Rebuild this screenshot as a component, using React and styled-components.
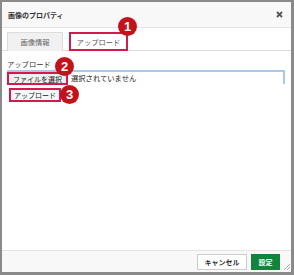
import React from 'react'
import styled, { createGlobalStyle } from 'styled-components'

const GlobalStyle = createGlobalStyle`
 html, body {
  margin: 0;
  padding: 0;
  background: #8a8a8a;
 }
 body {
  font-family: "Noto Sans CJK JP", "Noto Sans", sans-serif;
  color: #333;
 }
`

const Dialog = styled.div`
 box-sizing: border-box;
 width: 294px;
 height: 275px;
 display: flex;
 flex-direction: column;
 border-style: solid;
 border-color: #8a8a8a;
 border-width: 2px 3px 3px 2px;
 background: #fff;
`

const Header = styled.div`
 height: 25px;
 flex: none;
 display: flex;
 align-items: center;
 justify-content: space-between;
 padding: 0 8px 0 6px;
 background: #f8f8f8;
 border-bottom: 1px solid #e4e4e4;
`

const Title = styled.div`
 font-size: 7px;
 font-weight: 700;
 color: #333;
`

const Body = styled.div`
 flex: 1;
 display: flex;
 flex-direction: column;
 padding-top: 4px;
`

const TabBar = styled.div`
 display: flex;
 gap: 6px;
 padding-left: 5px;
 border-bottom: 1px solid #ddd;
`

const Tab = styled.div`
 position: relative;
 box-sizing: border-box;
 height: 19px;
 width: ${p => p.$w}px;
 display: flex;
 align-items: center;
 justify-content: center;
 font-size: 7.3px;
 color: ${p => (p.$active ? '#555' : '#666')};
 background: ${p => (p.$active ? '#fff' : '#f1f1f1')};
 border: ${p => (p.$active ? '2px solid #d31a4c' : '1px solid #ddd')};
 border-bottom: ${p => (p.$active ? '2px solid #d31a4c' : 'none')};
 margin-bottom: -1px;
`

const Content = styled.div`
 display: flex;
 flex-direction: column;
 padding: 9px 6px 0 5px;
`

const Label = styled.div`
 font-size: 7.3px;
 line-height: 9px;
 color: #333;
`

const FileField = styled.div`
 box-sizing: border-box;
 height: 14px;
 display: flex;
 align-items: flex-start;
 gap: 3px;
 border-top: 2px solid #a9c8f0;
 border-right: 2px solid #a9c8f0;
 margin-top: 1px;
`

const Outlined = styled.div`
 position: relative;
 box-sizing: border-box;
 height: ${p => p.$h}px;
 display: flex;
 align-items: center;
 padding: 0 ${p => p.$px}px;
 font-size: 7px;
 color: #222;
 background: ${p => p.$bg};
 border: 2px solid #d31a4c;
`

const FileText = styled.div`
 font-size: 7.3px;
 line-height: 10px;
 color: #222;
 margin-top: 1px;
`

const UploadRow = styled.div`
 display: flex;
 padding: 4px 0 0 2px;
`

const Badge = styled.div`
 position: absolute;
 width: 19px;
 height: 19px;
 border-radius: 50%;
 background: #c4121c;
 color: #fff;
 font-family: "Liberation Sans", Arial, sans-serif;
 font-size: 13px;
 font-weight: 700;
 display: flex;
 align-items: center;
 justify-content: center;
 top: ${p => p.$top}px;
 left: ${p => p.$left}px;
`

const Footer = styled.div`
 height: 21px;
 flex: none;
 display: flex;
 align-items: center;
 justify-content: flex-end;
 gap: 4px;
 padding-right: 11px;
 background: #f8f8f8;
 border-top: 1px solid #e4e4e4;
 position: relative;
`

const FooterButton = styled.div`
 box-sizing: border-box;
 height: 16px;
 width: ${p => p.$w}px;
 display: flex;
 align-items: center;
 justify-content: center;
 font-size: 7px;
 font-weight: 700;
 color: ${p => (p.$primary ? '#fff' : '#333')};
 background: ${p => (p.$primary ? '#13843b' : '#fff')};
 border: 1px solid ${p => (p.$primary ? '#13843b' : '#ccc')};
`

const Grip = styled.svg`
 position: absolute;
 right: 1px;
 bottom: 2px;
`

const App = () => (
 <>
  <GlobalStyle />
  <Dialog>
   <Header>
    <Title>画像のプロパティ</Title>
    <svg width="7" height="7" viewBox="0 0 7 7">
     <path d="M1 1L6 6M6 1L1 6" stroke="#555" strokeWidth="1.8" />
    </svg>
   </Header>
   <Body>
    <TabBar>
     <Tab $w={56}>画像情報</Tab>
     <Tab $w={59} $active>
      アップロード
      <Badge $top={-17} $left={47}>1</Badge>
     </Tab>
    </TabBar>
    <Content>
     <Label>アップロード</Label>
     <FileField>
      <Outlined $h={13} $px={4} $bg="#efefef">
       ファイルを選択
       <Badge $top={-17} $left={46}>2</Badge>
      </Outlined>
      <FileText>選択されていません</FileText>
     </FileField>
     <UploadRow>
      <Outlined $h={14} $px={3} $bg="#f7f7f7">
       アップロード
       <Badge $top={-5} $left={49}>3</Badge>
      </Outlined>
     </UploadRow>
    </Content>
   </Body>
   <Footer>
    <FooterButton $w={50}>キャンセル</FooterButton>
    <FooterButton $w={29} $primary>設定</FooterButton>
    <Grip width="6" height="6" viewBox="0 0 6 6">
     <path d="M6 0L0 6M6 3L3 6" stroke="#aaa" strokeWidth="1" />
    </Grip>
   </Footer>
  </Dialog>
 </>
)

export default App
